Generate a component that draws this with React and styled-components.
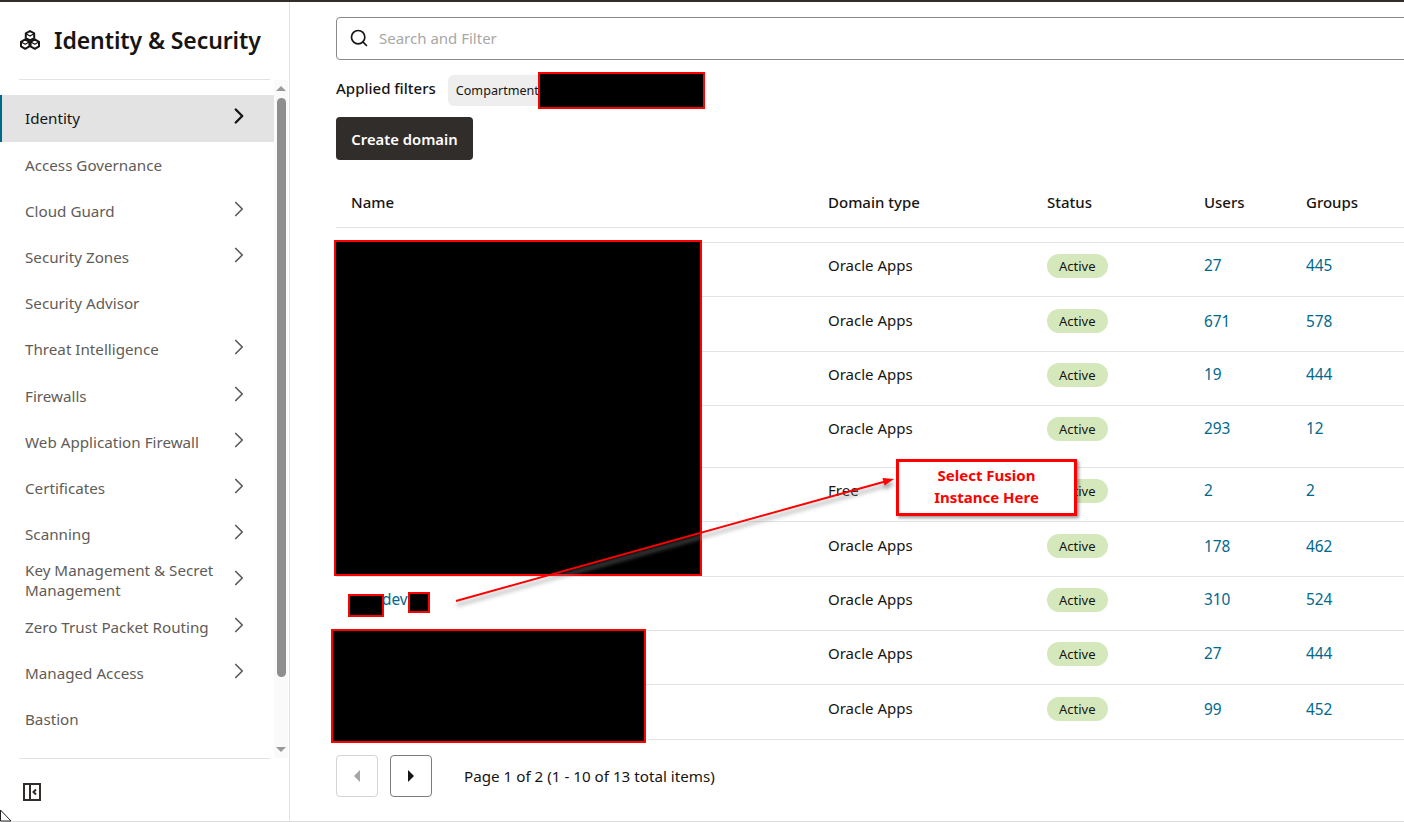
import React from 'react';
import styled, { createGlobalStyle } from 'styled-components';
import { ChevronRight, Search } from 'lucide-react';

const GlobalStyle = createGlobalStyle`
  html, body { margin: 0; padding: 0; background: #fff; overflow: hidden; }
  body { font-family: "Noto Sans", "Open Sans", Arial, sans-serif; color: #161513; }
`;

const Page = styled.div`
  position: relative;
  width: 1404px;
  height: 822px;
  box-sizing: border-box;
  overflow: hidden;
  border-top: 2px solid #312d2a;
  display: flex;
`;

const Frame = styled.div`
  flex: 1;
  display: flex;
  height: 819px;
  border-bottom: 1px solid #dcdcdc;
  min-width: 0;
`;

const Sidebar = styled.aside`
  width: 289px;
  flex: none;
  border-right: 1px solid #e4e3e2;
  display: flex;
  flex-direction: column;
`;

const SideHeader = styled.div`
  height: 78px;
  box-sizing: border-box;
  margin: 0 19px 0 19px;
  width: 251px;
  border-bottom: 1px solid #e4e3e2;
  display: flex;
  align-items: center;
  gap: 14px;
  padding: 0 0 2px 1px;
`;

const Title = styled.h1`
  margin: 0;
  font-size: 23px;
  font-weight: 600;
  letter-spacing: -0.1px;
  color: #161513;
  white-space: nowrap;
`;

const SideBody = styled.div`
  height: 678px;
  display: flex;
`;

const NavList = styled.nav`
  width: 274px;
  padding-top: 15px;
  box-sizing: border-box;
`;

const NavItem = styled.div`
  height: ${(p) => p.$h || 46}px;
  box-sizing: border-box;
  display: flex;
  align-items: center;
  justify-content: space-between;
  padding: 0 25px ${(p) => (p.$active ? 2 : 0)}px ${(p) => (p.$active ? 23 : 25)}px;
  border-left: ${(p) => (p.$active ? '2px solid #00688c' : 'none')};
  background: ${(p) => (p.$active ? '#e3e3e3' : 'transparent')};
  color: ${(p) => (p.$active ? '#161513' : '#5f5c58')};
  font-size: 15.2px;
  line-height: 20px;
  svg { flex: none; margin-top: -4px; margin-right: -3px; }
`;

const NavLabel = styled.span`
  max-width: 200px;
  white-space: ${(p) => (p.$wrap ? 'normal' : 'nowrap')};
`;

const Track = styled.div`
  width: 14px;
  background: #fafafa;
  position: relative;
  display: flex;
  flex-direction: column;
  align-items: center;
  justify-content: space-between;
  padding: 6px 0 6px;
  box-sizing: border-box;
`;

const Thumb = styled.div`
  position: absolute;
  top: 18px;
  left: 3px;
  width: 9px;
  height: 579px;
  border-radius: 5px;
  background: #8e8e8e;
`;

const Arrow = styled.div`
  width: 0;
  height: 0;
  border-left: 5px solid transparent;
  border-right: 5px solid transparent;
  ${(p) => (p.$up ? 'border-bottom: 5px solid #9a9a9a;' : 'border-top: 5px solid #9a9a9a;')}
`;

const SideFoot = styled.div`
  margin: 0 19px;
  width: 251px;
  border-top: 1px solid #e4e3e2;
  padding: 24px 0 0 4px;
  box-sizing: border-box;
  svg { display: block; }
`;

const Main = styled.main`
  flex: 1;
  min-width: 0;
  padding: 15px 0 0 46px;
  box-sizing: border-box;
`;

const SearchBox = styled.div`
  width: 1100px;
  height: 43px;
  box-sizing: border-box;
  border: 1px solid #8b8a88;
  border-radius: 4px;
  display: flex;
  align-items: center;
  gap: 10px;
  padding: 0 0 2px 12px;
  color: #a9a7a5;
  font-size: 15px;
  svg { color: #161513; }
`;

const FilterRow = styled.div`
  display: flex;
  align-items: center;
  gap: 12px;
  margin-top: 15px;
  height: 31px;
`;

const FilterLabel = styled.span`
  font-size: 15px;
  font-weight: 500;
  margin-top: -6px;
`;

const Chip = styled.span`
  width: 100px;
  height: 31px;
  box-sizing: border-box;
  background: #eeeeee;
  border-radius: 6px;
  padding-left: 8px;
  font-size: 12.6px;
  line-height: 31px;
  white-space: nowrap;
`;

const CreateButton = styled.button`
  display: block;
  margin-top: 11px;
  width: 137px;
  height: 43px;
  padding: 0;
  border: none;
  border-radius: 4px;
  background: #312d2a;
  color: #fff;
  font-family: inherit;
  font-size: 14.8px;
  font-weight: 600;
`;

const Grid = styled.div`
  display: grid;
  grid-template-columns: 477px 219px 157px 102px 1fr;
  align-items: center;
  padding-left: 15px;
  padding-bottom: ${(p) => p.$pb ?? 10}px;
  width: 1068px;
  box-sizing: border-box;
  height: ${(p) => p.$h}px;
  border-bottom: 1px solid #e4e3e2;
  font-size: 15px;
`;

const HeadRow = styled(Grid)`
  margin-top: 20px;
  font-weight: 500;
`;

const Spacer = styled.div`
  height: 14px;
  width: 1068px;
  border-bottom: 1px solid #e4e3e2;
`;

const Cell = styled.span`
  white-space: nowrap;
`;

const LinkCell = styled(Cell)`
  color: #00688c;
  font-size: 15.4px;
  margin-top: 2px;
`;

const DevName = styled(LinkCell)`
  padding-left: 31px;
`;

const Badge = styled.span`
  justify-self: start;
  background: #d4e8bb;
  border-radius: 12px;
  height: 24px;
  line-height: 24px;
  padding: 0 12px;
  font-size: 13px;
  margin-top: 2px;
`;

const Pager = styled.div`
  display: flex;
  align-items: center;
  margin-top: 15px;
`;

const PageButton = styled.button`
  width: 42px;
  height: 42px;
  padding: 0;
  margin-right: 12px;
  background: #fff;
  border: 1px solid ${(p) => (p.disabled ? '#d5d4d3' : '#7c7b79')};
  border-radius: 4px;
  display: flex;
  align-items: center;
  justify-content: center;
`;

const PageText = styled.span`
  margin-left: 20px;
  font-size: 15.2px;
`;

const Caret = styled.div`
  width: 0;
  height: 0;
  border-top: 6px solid transparent;
  border-bottom: 6px solid transparent;
  ${(p) => (p.$left ? 'border-right: 6px solid #a5a5a5;' : 'border-left: 6px solid #161513;')}
`;

// redaction boxes and the callout sit on top of the screenshot, so they are absolute
const Redaction = styled.div`
  position: absolute;
  left: ${(p) => p.$x}px;
  top: ${(p) => p.$y}px;
  width: ${(p) => p.$w}px;
  height: ${(p) => p.$h}px;
  box-sizing: border-box;
  background: #000;
  border: 2px solid #f00;
`;

const Callout = styled.div`
  position: absolute;
  left: 896px;
  top: 457px;
  width: 181px;
  height: 57px;
  box-sizing: border-box;
  background: #fff;
  border: 3px solid #f00;
  box-shadow: 2px 2px 3px rgba(0, 0, 0, 0.4);
  color: #f00;
  font-size: 15px;
  font-weight: 700;
  line-height: 22px;
  text-align: center;
  padding-top: 2px;
`;

const ArrowLine = styled.svg`
  position: absolute;
  left: 440px;
  top: 458px;
  filter: drop-shadow(1px 4px 2px rgba(140, 140, 140, 0.9));
`;

const Cursor = styled.svg`
  position: absolute;
  left: 0;
  top: 806px;
`;

const navItems = [
  { label: 'Identity', arrow: true, active: true, h: 47 },
  { label: 'Access Governance' },
  { label: 'Cloud Guard', arrow: true },
  { label: 'Security Zones', arrow: true },
  { label: 'Security Advisor' },
  { label: 'Threat Intelligence', arrow: true },
  { label: 'Firewalls', arrow: true, h: 47 },
  { label: 'Web Application Firewall', arrow: true },
  { label: 'Certificates', arrow: true },
  { label: 'Scanning', arrow: true },
  { label: 'Key Management & Secret Management', arrow: true, wrap: true },
  { label: 'Zero Trust Packet Routing', arrow: true, h: 47 },
  { label: 'Managed Access', arrow: true },
  { label: 'Bastion' },
];

const rows = [
  { type: 'Oracle Apps', users: 27, groups: 445, h: 54 },
  { type: 'Oracle Apps', users: 671, groups: 578, h: 55, pb: 8 },
  { type: 'Oracle Apps', users: 19, groups: 444, h: 54 },
  { type: 'Oracle Apps', users: 293, groups: 12, h: 62, pb: 18 },
  { type: 'Free', users: 2, groups: 2, h: 54 },
  { type: 'Oracle Apps', users: 178, groups: 462, h: 55, pb: 8 },
  { name: 'dev', type: 'Oracle Apps', users: 310, groups: 524, h: 54 },
  { type: 'Oracle Apps', users: 27, groups: 444, h: 54 },
  { type: 'Oracle Apps', users: 99, groups: 452, h: 55, pb: 8 },
];

const redactions = [
  { x: 538, y: 70, w: 167, h: 37 },
  { x: 334, y: 238, w: 368, h: 336 },
  { x: 348, y: 592, w: 36, h: 23 },
  { x: 408, y: 590, w: 22, h: 21 },
  { x: 331, y: 627, w: 315, h: 114 },
];

function CubesLogo() {
  return (
    <svg width="20" height="20" viewBox="0 0 20 20" fill="none" stroke="#161513" strokeWidth="2" strokeLinejoin="round">
      <path d="M10 1 14.2 3.4V8L10 10.4 5.8 8V3.4Z" />
      <path d="M5.2 9.4 9.4 11.8V16.4L5.2 18.8 1 16.4V11.8Z" />
      <path d="M14.8 9.4 19 11.8V16.4L14.8 18.8 10.6 16.4V11.8Z" />
      <path d="M6 3.7 10 6 14 3.7M1.2 12 5.2 14.2 9.2 12M10.8 12 14.8 14.2 18.8 12" strokeWidth="1.3" />
    </svg>
  );
}

function CollapseIcon() {
  return (
    <svg width="18" height="18" viewBox="0 0 18 18" fill="none">
      <rect x="1" y="1" width="16" height="16" stroke="#312d2a" strokeWidth="2" />
      <path d="M7 1V17" stroke="#312d2a" strokeWidth="2" />
      <path d="M13 6.5 10.5 9 13 11.5" stroke="#312d2a" strokeWidth="2" />
    </svg>
  );
}

export default function App() {
  return (
    <Page>
      <GlobalStyle />
      <Frame>
        <Sidebar>
          <SideHeader>
            <CubesLogo />
            <Title>Identity &amp; Security</Title>
          </SideHeader>
          <SideBody>
            <NavList>
              {navItems.map((item) => (
                <NavItem key={item.label} $active={item.active} $h={item.h}>
                  <NavLabel $wrap={item.wrap}>{item.label}</NavLabel>
                  {item.arrow && (
                    <ChevronRight size={26} strokeWidth={item.active ? 2.2 : 1.6} color={item.active ? '#161513' : '#5f5c58'} />
                  )}
                </NavItem>
              ))}
            </NavList>
            <Track>
              <Arrow $up />
              <Thumb />
              <Arrow />
            </Track>
          </SideBody>
          <SideFoot>
            <CollapseIcon />
          </SideFoot>
        </Sidebar>
        <Main>
          <SearchBox>
            <Search size={20} strokeWidth={2} />
            <span>Search and Filter</span>
          </SearchBox>
          <FilterRow>
            <FilterLabel>Applied filters</FilterLabel>
            <Chip>Compartment</Chip>
          </FilterRow>
          <CreateButton>Create domain</CreateButton>
          <HeadRow $h={48} $pb={4}>
            <span>Name</span>
            <span>Domain type</span>
            <span>Status</span>
            <span>Users</span>
            <span>Groups</span>
          </HeadRow>
          <Spacer />
          {rows.map((row, i) => (
            <Grid key={i} $h={row.h} $pb={row.pb}>
              {row.name ? <DevName>{row.name}</DevName> : <span />}
              <Cell>{row.type}</Cell>
              <Badge>Active</Badge>
              <LinkCell>{row.users}</LinkCell>
              <LinkCell>{row.groups}</LinkCell>
            </Grid>
          ))}
          <Pager>
            <PageButton disabled aria-label="Previous page"><Caret $left /></PageButton>
            <PageButton aria-label="Next page"><Caret /></PageButton>
            <PageText>Page 1 of 2 (1 - 10 of 13 total items)</PageText>
          </Pager>
        </Main>
      </Frame>

      {redactions.map((r) => (
        <Redaction key={r.y} $x={r.x} $y={r.y} $w={r.w} $h={r.h} />
      ))}
      <ArrowLine width="470" height="160" viewBox="0 0 470 160">
        <path d="M16 141 446 21.2" stroke="#f00" strokeWidth="2" fill="none" />
        <path d="M454 19 442.5 18 444.5 25.5Z" fill="#f00" />
      </ArrowLine>
      <Callout>
        Select Fusion
        <br />
        Instance Here
      </Callout>
      <Cursor width="14" height="14" viewBox="0 0 14 14">
        <path d="M0.5 2 11 13H0.5Z" fill="#fff" stroke="#222" strokeWidth="1" />
      </Cursor>
    </Page>
  );
}
